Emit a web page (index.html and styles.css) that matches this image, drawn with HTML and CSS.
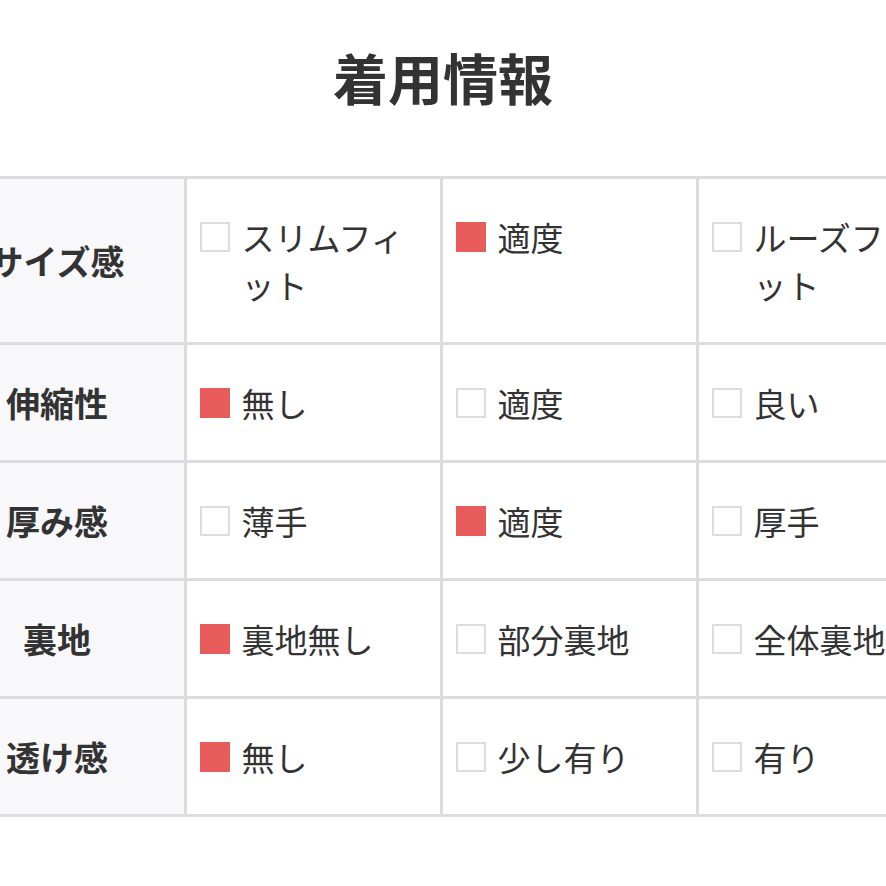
FILE: index.html
```html
<!DOCTYPE html>
<html lang="ja">
<head>
<meta charset="utf-8">
<title>着用情報</title>
<link rel="stylesheet" href="styles.css">
</head>
<body>
<h1 class="title">着用情報</h1>
<div class="wrap">
<table class="info">
<colgroup><col class="c"><col class="c"><col class="c"><col class="c"></colgroup>
<tbody>
<tr>
<th>サイズ感</th>
<td><div class="opt"><span class="box"></span><span class="txt">スリムフィット</span></div></td>
<td><div class="opt"><span class="box on"></span><span class="txt">適度</span></div></td>
<td><div class="opt"><span class="box"></span><span class="txt">ルーズフィット</span></div></td>
</tr>
<tr>
<th>伸縮性</th>
<td><div class="opt"><span class="box on"></span><span class="txt">無し</span></div></td>
<td><div class="opt"><span class="box"></span><span class="txt">適度</span></div></td>
<td><div class="opt"><span class="box"></span><span class="txt">良い</span></div></td>
</tr>
<tr>
<th>厚み感</th>
<td><div class="opt"><span class="box"></span><span class="txt">薄手</span></div></td>
<td><div class="opt"><span class="box on"></span><span class="txt">適度</span></div></td>
<td><div class="opt"><span class="box"></span><span class="txt">厚手</span></div></td>
</tr>
<tr>
<th>裏地</th>
<td><div class="opt"><span class="box on"></span><span class="txt">裏地無し</span></div></td>
<td><div class="opt"><span class="box"></span><span class="txt">部分裏地</span></div></td>
<td><div class="opt"><span class="box"></span><span class="txt">全体裏地</span></div></td>
</tr>
<tr>
<th>透け感</th>
<td><div class="opt"><span class="box on"></span><span class="txt">無し</span></div></td>
<td><div class="opt"><span class="box"></span><span class="txt">少し有り</span></div></td>
<td><div class="opt"><span class="box"></span><span class="txt">有り</span></div></td>
</tr>
</tbody>
</table>
</div>
</body>
</html>
```
FILE: styles.css
```css
html, body {
  margin: 0;
  padding: 0;
  background: #ffffff;
  overflow: hidden;
}
body {
  font-family: "Noto Sans CJK JP", "Noto Sans", sans-serif;
  color: #333333;
}
.title {
  margin: 0;
  padding-top: 38px;
  font-size: 55px;
  line-height: 76px;
  font-weight: 700;
  text-align: center;
  color: #333333;
}
.wrap {
  margin-top: 62px;
  padding-right: 4px;
  display: flex;
  justify-content: center;
}
.info {
  flex: none;
  width: 1027px;
  table-layout: fixed;
  border-collapse: collapse;
}
.c {
  width: 256px;
}
.info th,
.info td {
  border: 3px solid #dcdcdc;
}
.info th {
  background: #f8f8fa;
  font-size: 34px;
  font-weight: 700;
  line-height: 48px;
  text-align: center;
  vertical-align: middle;
  padding: 0;
}
.info td {
  vertical-align: top;
  padding: 33.5px 10px 33.5px 13px;
  font-size: 33px;
  line-height: 48px;
  font-weight: 400;
  overflow: hidden;
}
.opt {
  display: flex;
  align-items: flex-start;
  gap: 12px;
}
.box {
  flex: none;
  box-sizing: border-box;
  width: 30px;
  height: 30px;
  margin-top: 9px;
  border: 2px solid #dddddd;
  background: #ffffff;
}
.box.on {
  border: none;
  background: #e85d5b;
}
.txt {
  white-space: normal;
}
.info tr:nth-child(n+2) .txt {
  white-space: nowrap;
}
```
